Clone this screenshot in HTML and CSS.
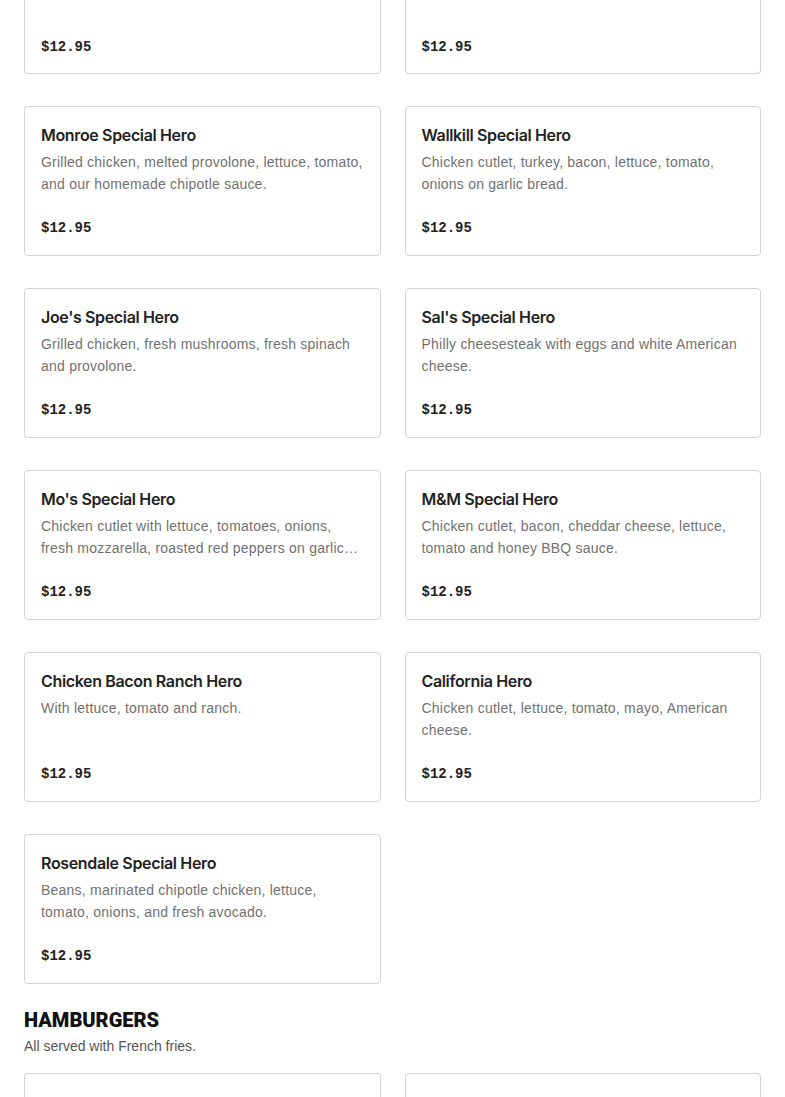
FILE: index.html
```html
<!DOCTYPE html>
<html lang="en">
<head>
<meta charset="utf-8">
<title>Menu</title>
<link rel="stylesheet" href="styles.css">
</head>
<body>
<main class="menu">
  <section class="section">
    <div class="grid">
      <article class="card card-cut">
        <div class="price">$12.95</div>
      </article>
      <article class="card card-cut">
        <div class="price">$12.95</div>
      </article>
      <article class="card">
        <h3 class="name">Monroe Special Hero</h3>
        <p class="desc">Grilled chicken, melted provolone, lettuce, tomato, and our homemade chipotle sauce.</p>
        <div class="price">$12.95</div>
      </article>
      <article class="card">
        <h3 class="name">Wallkill Special Hero</h3>
        <p class="desc">Chicken cutlet, turkey, bacon, lettuce, tomato, onions on garlic bread.</p>
        <div class="price">$12.95</div>
      </article>
      <article class="card">
        <h3 class="name">Joe's Special Hero</h3>
        <p class="desc">Grilled chicken, fresh mushrooms, fresh spinach and provolone.</p>
        <div class="price">$12.95</div>
      </article>
      <article class="card">
        <h3 class="name">Sal's Special Hero</h3>
        <p class="desc">Philly cheesesteak with eggs and white American cheese.</p>
        <div class="price">$12.95</div>
      </article>
      <article class="card">
        <h3 class="name">Mo's Special Hero</h3>
        <p class="desc">Chicken cutlet with lettuce, tomatoes, onions, fresh mozzarella, roasted red peppers on garlic bread.</p>
        <div class="price">$12.95</div>
      </article>
      <article class="card">
        <h3 class="name">M&amp;M Special Hero</h3>
        <p class="desc">Chicken cutlet, bacon, cheddar cheese, lettuce, tomato and honey BBQ sauce.</p>
        <div class="price">$12.95</div>
      </article>
      <article class="card">
        <h3 class="name">Chicken Bacon Ranch Hero</h3>
        <p class="desc">With lettuce, tomato and ranch.</p>
        <div class="price">$12.95</div>
      </article>
      <article class="card">
        <h3 class="name">California Hero</h3>
        <p class="desc">Chicken cutlet, lettuce, tomato, mayo, American cheese.</p>
        <div class="price">$12.95</div>
      </article>
      <article class="card">
        <h3 class="name">Rosendale Special Hero</h3>
        <p class="desc">Beans, marinated chipotle chicken, lettuce, tomato, onions, and fresh avocado.</p>
        <div class="price">$12.95</div>
      </article>
    </div>
  </section>
  <section class="section">
    <h2 class="section-title">HAMBURGERS</h2>
    <p class="section-note">All served with French fries.</p>
    <div class="grid">
      <article class="card card-peek"></article>
      <article class="card card-peek"></article>
    </div>
  </section>
</main>
</body>
</html>
```
FILE: styles.css
```css
* { box-sizing: border-box; }
html, body { margin: 0; padding: 0; background: #fff; }
body { font-family: "Liberation Sans", Arial, sans-serif; color: #222; overflow: hidden; }
.menu { padding: 0 24px; }
.section { margin-bottom: 24px; }
.grid {
  display: grid;
  grid-template-columns: 1fr 1fr;
  column-gap: 24px;
  row-gap: 32px;
}
.card {
  border: 1px solid #d3d3d3;
  border-radius: 4px;
  padding: 17px 16px 15px;
  height: 150px;
  display: flex;
  flex-direction: column;
}
.card-cut {
  height: 74px;
  border-top: 0;
  border-radius: 0 0 4px 4px;
  justify-content: flex-end;
  padding-bottom: 15px;
}
.card-cut .price { margin-top: 0; }
.card-peek {
  height: 40px;
  border-bottom: 0;
  border-radius: 4px 4px 0 0;
}
.name {
  margin: 0;
  font-family: Inter, "Liberation Sans", sans-serif;
  font-size: 16px;
  line-height: 22px;
  font-weight: 600;
  letter-spacing: -0.35px;
  color: #222;
}
.desc {
  margin: 5px 0 0;
  font-size: 14px;
  line-height: 22px;
  letter-spacing: 0.22px;
  color: #717171;
  height: 44px;
  display: -webkit-box;
  -webkit-line-clamp: 2;
  -webkit-box-orient: vertical;
  overflow: hidden;
}
.price {
  margin-top: 22px;
  font-family: "Liberation Mono", "Courier New", monospace;
  font-size: 14px;
  line-height: 22px;
  font-weight: 700;
  color: #222;
}
.section-title {
  margin: 0;
  font-family: Roboto, "Liberation Sans", sans-serif;
  font-weight: 900;
  font-size: 20px;
  line-height: 24px;
  color: #111;
}
.section-note {
  margin: 3px 0 16px;
  font-size: 14px;
  line-height: 22px;
  color: #555;
}
```
